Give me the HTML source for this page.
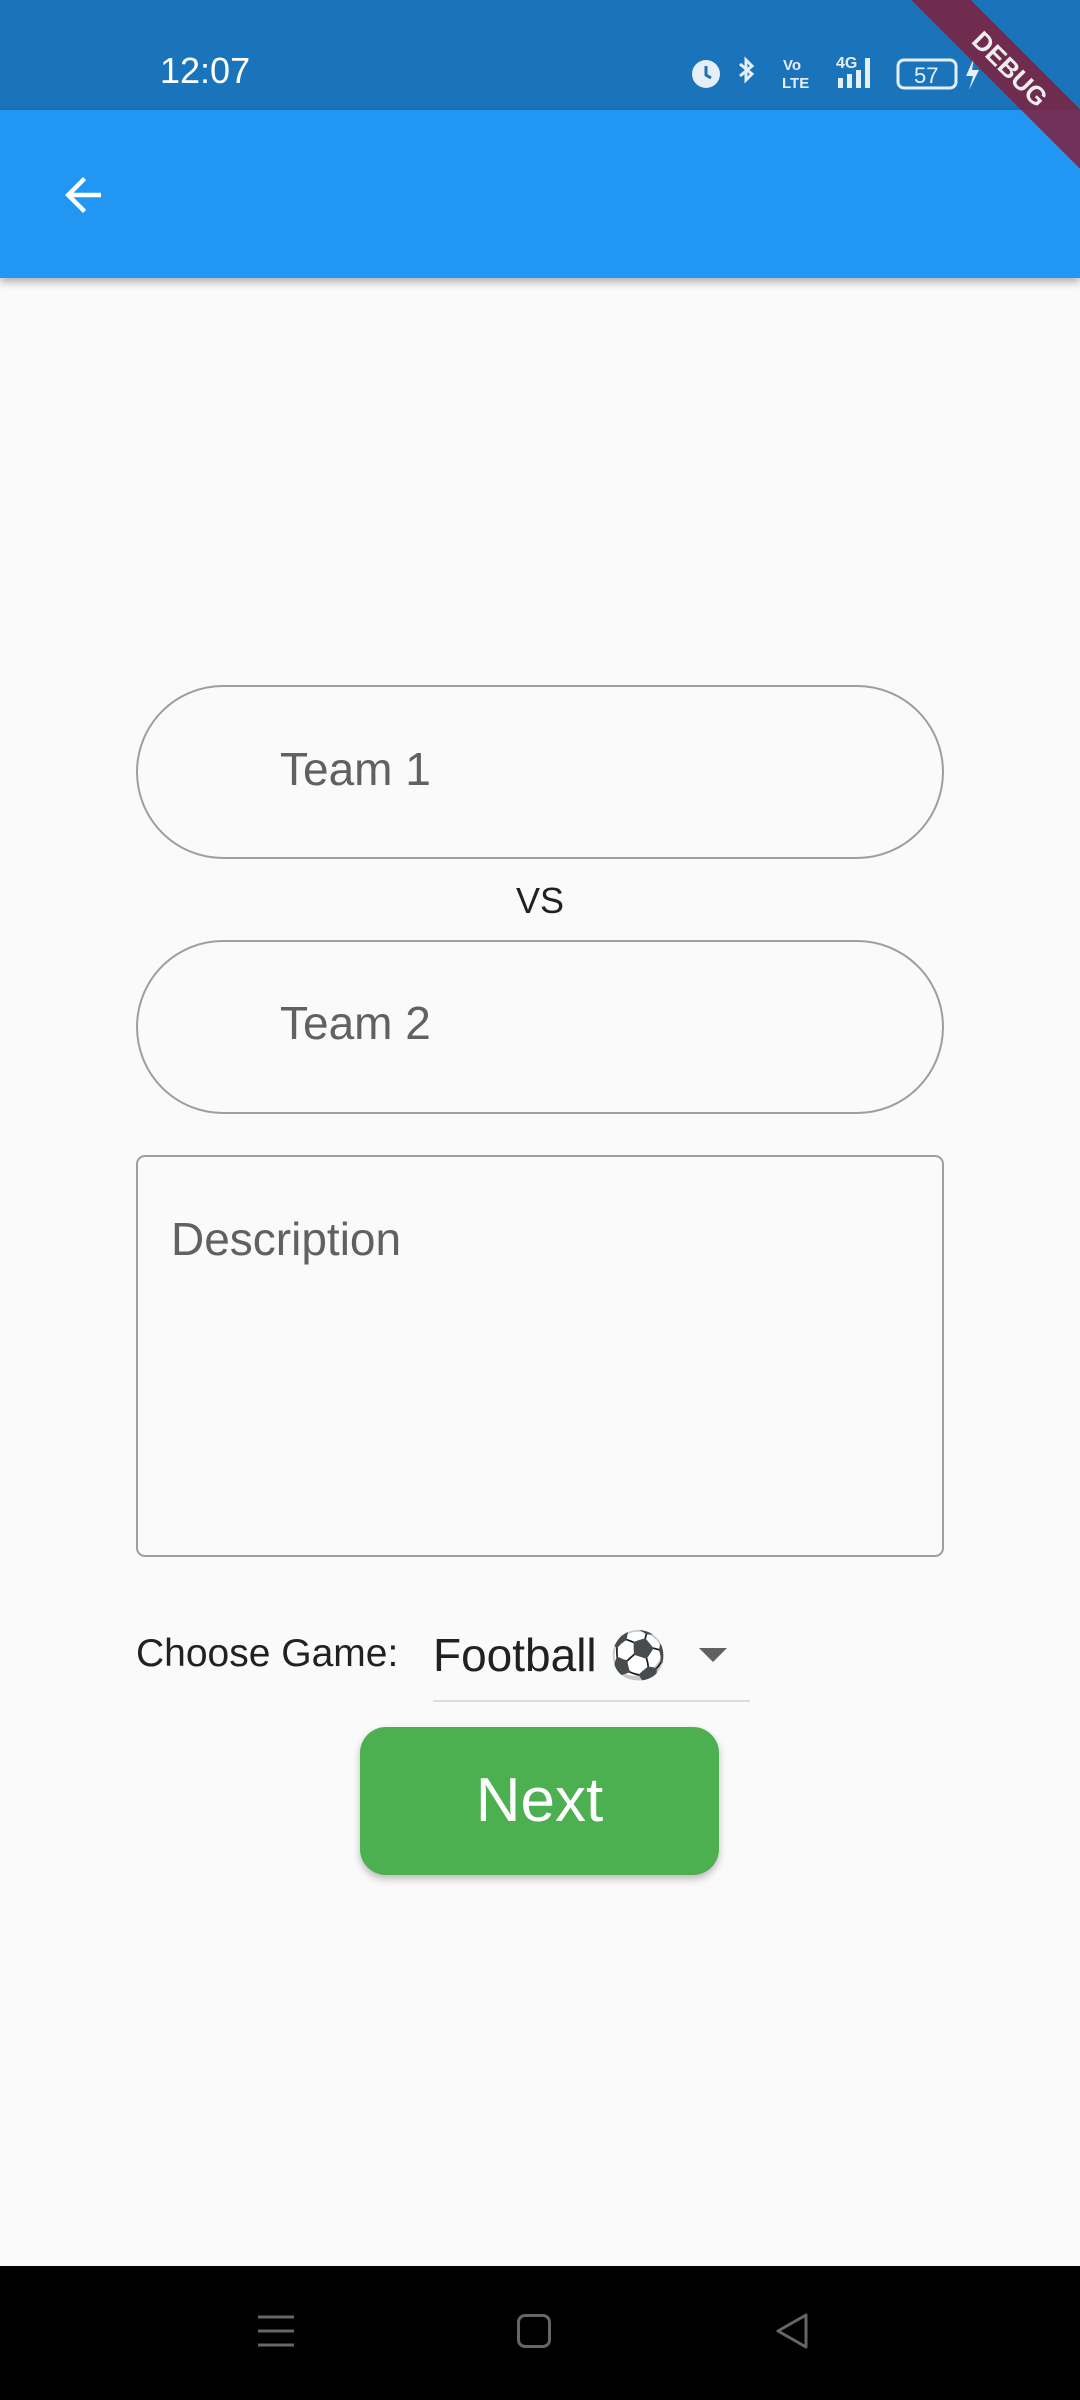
<!DOCTYPE html>
<html><head><meta charset="utf-8"><style>
*{margin:0;padding:0;box-sizing:border-box}
body{width:1080px;height:2400px;background:#fafafa;position:relative;overflow:hidden;font-family:"Liberation Sans",sans-serif}
.abs{position:absolute}
.field{position:absolute;left:136px;width:808px;border:2px solid #9e9e9e;border-radius:90px;height:174px}
.ph{position:absolute;color:#616161;font-size:46px}
</style></head><body>
<div class="abs" style="left:0;top:0;width:1080px;height:110px;background:#1a74bb"></div>
<div class="abs" style="left:160px;top:50px;color:#fff;font-size:36px">12:07</div>
<svg class="abs" style="left:688px;top:52px" width="300" height="40" viewBox="0 0 300 40">
<circle cx="18" cy="22" r="14" fill="#e6eef7"/><path d="M18 14v9l5 3" stroke="#1a74bb" stroke-width="3" fill="none"/>
<path d="M52 12l12 10-6 6V8l6 6-12 10" stroke="#e6eef7" stroke-width="3" fill="none"/>
<text x="95" y="18" font-size="15" fill="#e6eef7" font-family="Liberation Sans" font-weight="bold">Vo</text>
<text x="94" y="36" font-size="15" fill="#e6eef7" font-family="Liberation Sans" font-weight="bold">LTE</text>
<text x="148" y="16" font-size="16" fill="#e6eef7" font-family="Liberation Sans" font-weight="bold">4G</text>
<rect x="150" y="26" width="5" height="10" fill="#e6eef7"/><rect x="159" y="22" width="5" height="14" fill="#e6eef7"/><rect x="168" y="18" width="5" height="18" fill="#e6eef7"/><rect x="177" y="6" width="5" height="30" fill="#e6eef7"/>
<rect x="210" y="8" width="58" height="28" rx="6" fill="none" stroke="#e6eef7" stroke-width="3"/>
<text x="226" y="31" font-size="22" fill="#e6eef7" font-family="Liberation Sans">57</text>
<path d="M286 6l-8 18h7l-4 14 10-20h-7z" fill="#e6eef7"/>
</svg>
<div class="abs" style="left:0;top:110px;width:1080px;height:168px;background:#2196f3;box-shadow:0 4px 8px rgba(0,0,0,.3)"></div>
<svg class="abs" style="left:56px;top:168px" width="54" height="54" viewBox="0 0 24 24"><path d="M20 11H7.8l5.6-5.6L12 4l-8 8 8 8 1.4-1.4L7.8 13H20z" fill="#fff"/></svg>
<div class="abs" style="left:860px;top:48px;width:300px;height:42px;background:rgba(128,32,60,.85);transform:rotate(45deg);color:#eee;font-weight:bold;font-size:26px;text-align:center;line-height:42px">DEBUG</div>
<div class="field" style="top:685px"></div>
<div class="ph" style="left:280px;top:742px">Team 1</div>
<div class="abs" style="left:0;width:1080px;text-align:center;top:880px;font-size:36px;color:#212121">VS</div>
<div class="field" style="top:940px"></div>
<div class="ph" style="left:280px;top:996px">Team 2</div>
<div class="abs" style="left:136px;top:1155px;width:808px;height:402px;border:2px solid #9e9e9e;border-radius:9px"></div>
<div class="ph" style="left:171px;top:1212px">Description</div>
<div class="abs" style="left:136px;top:1632px;font-size:39px;color:#212121">Choose Game:</div>
<div class="abs" style="left:433px;top:1628px;font-size:46px;color:#212121">Football <span style="font-family:'DejaVu Sans';color:#555">⚽</span></div>
<div class="abs" style="left:699px;top:1648px;width:0;height:0;border-left:14px solid transparent;border-right:14px solid transparent;border-top:14px solid #616161"></div>
<div class="abs" style="left:433px;top:1700px;width:317px;height:2px;background:#ddd"></div>
<div class="abs" style="left:360px;top:1727px;width:359px;height:148px;background:#4caf50;border-radius:26px;box-shadow:0 4px 8px rgba(0,0,0,.25);color:#fff;font-size:62px;text-align:center;line-height:148px">Next</div>
<div class="abs" style="left:0;top:2266px;width:1080px;height:134px;background:#000"></div>
<svg class="abs" style="left:256px;top:2311px" width="40" height="40"><path d="M2 6h36M2 20h36M2 34h36" stroke="#666" stroke-width="3"/></svg>
<div class="abs" style="left:517px;top:2314px;width:34px;height:34px;border:3px solid #666;border-radius:8px"></div>
<svg class="abs" style="left:772px;top:2311px" width="40" height="40"><path d="M34 4L6 20l28 16z" fill="none" stroke="#666" stroke-width="3" stroke-linejoin="round"/></svg>
</body></html>
